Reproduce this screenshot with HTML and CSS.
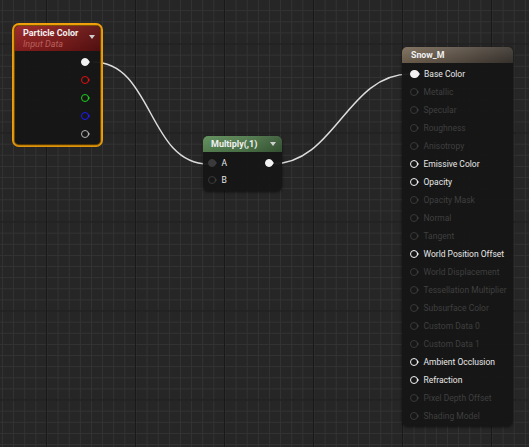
FILE: index.html
```html
<!DOCTYPE html>
<html>
<head>
<meta charset="utf-8">
<link rel="stylesheet" href="styles.css">
</head>
<body>
<div class="canvas">
  <svg class="wires" width="529" height="447" viewBox="0 0 529 447">
    <path d="M93 62 C153 62 148 164 208 164" />
    <path d="M272 164 C335 164 347 74 410 74" />
  </svg>

  <div class="selected particle">
    <div class="node">
      <div class="header red">
        <div class="titles">
          <div class="title">Particle Color</div>
          <div class="subtitle">Input Data</div>
        </div>
        <span class="arrow"></span>
      </div>
      <div class="body outputs">
        <div class="row right"><span class="pin filled white"></span></div>
        <div class="row right"><span class="pin c-red"></span></div>
        <div class="row right"><span class="pin c-green"></span></div>
        <div class="row right"><span class="pin c-blue"></span></div>
        <div class="row right"><span class="pin c-grey"></span></div>
      </div>
    </div>
  </div>

  <div class="node multiply">
    <div class="header green">
      <div class="title">Multiply(,1)</div>
      <span class="arrow"></span>
    </div>
    <div class="body mbody">
      <div class="mcol">
        <div class="mrow"><span class="pin filled dimfill"></span><span class="label on">A</span></div>
        <div class="mrow"><span class="pin dim"></span><span class="label on">B</span></div>
      </div>
      <div class="mcol">
        <div class="mrow"><span class="pin filled white"></span></div>
      </div>
    </div>
  </div>

  <div class="node snow">
    <div class="header brown">
      <div class="title">Snow_M</div>
    </div>
    <div class="body inputs">
      <div class="irow"><span class="pin filled white"></span><span class="label on">Base Color</span></div>
      <div class="irow"><span class="pin dim"></span><span class="label off">Metallic</span></div>
      <div class="irow"><span class="pin dim"></span><span class="label off">Specular</span></div>
      <div class="irow"><span class="pin dim"></span><span class="label off">Roughness</span></div>
      <div class="irow"><span class="pin dim"></span><span class="label off">Anisotropy</span></div>
      <div class="irow"><span class="pin white"></span><span class="label on">Emissive Color</span></div>
      <div class="irow"><span class="pin white"></span><span class="label on">Opacity</span></div>
      <div class="irow"><span class="pin dim"></span><span class="label off">Opacity Mask</span></div>
      <div class="irow"><span class="pin dim"></span><span class="label off">Normal</span></div>
      <div class="irow"><span class="pin dim"></span><span class="label off">Tangent</span></div>
      <div class="irow"><span class="pin white"></span><span class="label on">World Position Offset</span></div>
      <div class="irow"><span class="pin dim"></span><span class="label off">World Displacement</span></div>
      <div class="irow"><span class="pin dim"></span><span class="label off">Tessellation Multiplier</span></div>
      <div class="irow"><span class="pin dim"></span><span class="label off">Subsurface Color</span></div>
      <div class="irow"><span class="pin dim"></span><span class="label off">Custom Data 0</span></div>
      <div class="irow"><span class="pin dim"></span><span class="label off">Custom Data 1</span></div>
      <div class="irow"><span class="pin white"></span><span class="label on">Ambient Occlusion</span></div>
      <div class="irow"><span class="pin white"></span><span class="label on">Refraction</span></div>
      <div class="irow"><span class="pin dim"></span><span class="label off">Pixel Depth Offset</span></div>
      <div class="irow"><span class="pin dim"></span><span class="label off">Shading Model</span></div>
    </div>
  </div>
</div>
</body>
</html>
```

FILE: styles.css
```css
html, body {
  margin: 0;
  padding: 0;
}
body {
  width: 529px;
  height: 447px;
  overflow: hidden;
  font-family: Roboto, "Liberation Sans", sans-serif;
  background-color: #262626;
  background-image:
    linear-gradient(90deg, #191919 1px, transparent 1px),
    linear-gradient(0deg, #191919 1px, transparent 1px),
    linear-gradient(90deg, #333333 1px, transparent 1px),
    linear-gradient(0deg, #333333 1px, transparent 1px);
  background-size: 89px 89px, 89px 89px, 11.125px 11.125px, 11.125px 11.125px;
  background-position: 46px 0, 0 44.5px, 2px 0, 0 0;
}
.canvas {
  position: relative;
  width: 529px;
  height: 447px;
}
.wires {
  position: absolute;
  left: 0;
  top: 0;
}
.wires path {
  fill: none;
  stroke: #dcdcdc;
  stroke-width: 1.5;
}

.node {
  box-sizing: border-box;
  background: rgba(22, 22, 22, 0.96);
  border-radius: 5px;
  box-shadow: 0 1px 3px rgba(0, 0, 0, 0.6);
  display: flex;
  flex-direction: column;
  overflow: hidden;
  color: #e6e6e6;
}

.selected {
  position: absolute;
  box-sizing: border-box;
  border: 2px solid #f2a20c;
  border-radius: 7px;
  padding: 1px;
  box-shadow: inset 0 0 0 1px #8a5a06;
}
.particle {
  left: 12px;
  top: 23px;
  width: 91px;
  height: 124px;
}
.particle .node {
  width: 100%;
  height: 100%;
  border-radius: 4px;
}

.header {
  display: flex;
  align-items: flex-start;
  justify-content: space-between;
  flex: none;
}
.title {
  font-weight: bold;
  font-size: 9px;
  color: #f0f0f0;
  white-space: nowrap;
}
.subtitle {
  font-style: italic;
  font-size: 9px;
  line-height: 10px;
  color: #b8605e;
}
.arrow {
  width: 0;
  height: 0;
  border-left: 3px solid transparent;
  border-right: 3px solid transparent;
  border-top: 4.5px solid #d0d0d0;
}

.red {
  height: 25px;
  padding: 1.5px 5px 0 8px;
  box-sizing: border-box;
  background: linear-gradient(180deg, rgba(255,255,255,0.05), rgba(0,0,0,0.15)),
              linear-gradient(90deg, #9a2222 0%, #801a1a 55%, #5e1212 100%);
}
.red .title { line-height: 11px; }
.red .arrow { margin-top: 7px; }

.outputs {
  padding-top: 2px;
  display: flex;
  flex-direction: column;
}
.row {
  height: 18px;
  display: flex;
  align-items: center;
}
.right {
  justify-content: flex-end;
  padding-right: 11px;
}

.pin {
  position: relative;
  flex: none;
  box-sizing: border-box;
  width: 8px;
  height: 8px;
  border-radius: 50%;
  border: 1.6px solid #3c3c3c;
}
.pin::after {
  content: "";
  position: absolute;
  left: 100%;
  top: 50%;
  margin-top: -2.5px;
  border-top: 2.5px solid transparent;
  border-bottom: 2.5px solid transparent;
  border-left: 2.5px solid #3c3c3c;
}
.pin.white { border-color: #f2f2f2; }
.pin.white::after { border-left-color: #f2f2f2; }
.pin.filled.white { background: #f2f2f2; width: 8.5px; height: 8.5px; }
.pin.c-red { border-color: #e01010; }
.pin.c-red::after { border-left-color: #e01010; }
.pin.c-green { border-color: #18d018; }
.pin.c-green::after { border-left-color: #18d018; }
.pin.c-blue { border-color: #1a1aff; }
.pin.c-blue::after { border-left-color: #1a1aff; }
.pin.c-grey { border-color: #b4b4b4; }
.pin.c-grey::after { border-left-color: #b4b4b4; }
.pin.dim { border-color: #383838; }
.pin.dimfill { background: #3a3a3a; border-color: #3a3a3a; }

.label {
  font-size: 8.5px;
  white-space: nowrap;
}
.label.on { color: #e8e8e8; }
.label.off { color: #3f3f3f; }

.multiply {
  position: absolute;
  left: 203px;
  top: 136px;
  width: 79px;
  height: 55px;
}
.green {
  height: 16px;
  padding: 0 6px 0 8px;
  box-sizing: border-box;
  align-items: center;
  background: linear-gradient(180deg, rgba(255,255,255,0.06), rgba(0,0,0,0.12)),
              linear-gradient(90deg, #5d8c58 0%, #4f7a4b 55%, #3a5a37 100%);
}
.green .title { line-height: 16px; }
.mbody {
  display: flex;
  justify-content: space-between;
  padding: 2.5px 9px 0 5px;
}
.mcol {
  display: flex;
  flex-direction: column;
}
.mrow {
  height: 17px;
  display: flex;
  align-items: center;
  gap: 5.5px;
}

.snow {
  position: absolute;
  left: 402px;
  top: 47px;
  width: 111px;
  height: 379px;
}
.brown {
  height: 16px;
  padding: 0 6px 0 9px;
  box-sizing: border-box;
  align-items: center;
  background: linear-gradient(180deg, rgba(255,255,255,0.08), rgba(0,0,0,0.15)),
              linear-gradient(90deg, #7a6a56 0%, #62564a 45%, #3e3832 100%);
}
.brown .title { line-height: 16px; font-size: 8.8px; }
.inputs {
  padding: 2px 0 0 8px;
  display: flex;
  flex-direction: column;
}
.irow {
  height: 18px;
  display: flex;
  align-items: center;
  gap: 5.5px;
}
```
